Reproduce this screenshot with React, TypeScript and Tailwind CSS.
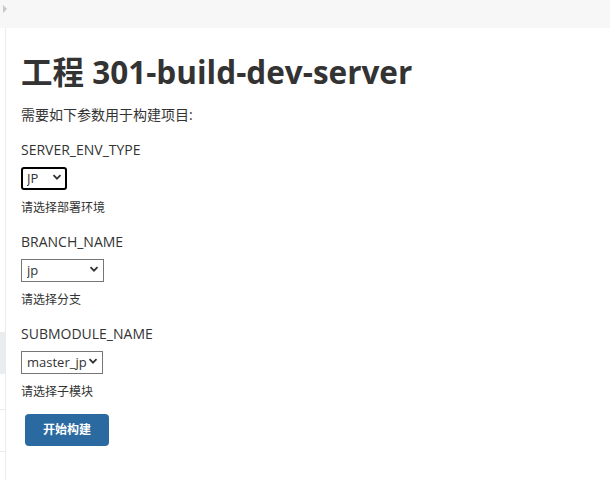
import React from "react";

const font = { fontFamily: '"Open Sans", "Noto Sans CJK SC", sans-serif' };

const Chevron = () => (
  <svg width="10" height="10" viewBox="0 0 10 10" className="absolute right-[5px] top-1/2 -translate-y-1/2 pointer-events-none">
    <path d="M1.5 3.2 L5 6.7 L8.5 3.2" fill="none" stroke="#333" strokeWidth="1.8" />
  </svg>
);

const ParamSelect = ({ value, width, focused }: { value: string; width: string; focused?: boolean }) => (
  <div className={`relative ${width} h-[23px]`}>
    <select
      defaultValue={value}
      className={
        focused
          ? "appearance-none w-full h-full border-2 border-black rounded-[3px] pl-[4px] text-[13px] text-[#333] bg-white outline-none"
          : "appearance-none w-full h-full border border-[#767676] pl-[5px] text-[13px] text-[#333] bg-white outline-none"
      }
      style={font}
    >
      <option>{value}</option>
    </select>
    <Chevron />
  </div>
);

const Param = ({ name, value, width, help, focused }: { name: string; value: string; width: string; help: string; focused?: boolean }) => (
  <div className="mb-[15px]">
    <div className="text-[14px] leading-[20px] text-[#333] mb-[5px]">{name}</div>
    <ParamSelect value={value} width={width} focused={focused} />
    <div className="text-[12px] leading-[18px] text-[#333] mt-[11px]">{help}</div>
  </div>
);

export default function App() {
  return (
    <div className="w-[610px] h-[480px] bg-white overflow-hidden flex flex-col" style={font}>
      <div className="h-[28px] bg-[#f7f7f7] relative shrink-0">
        <div className="absolute left-[3px] top-[5px] w-0 h-0 border-y-[4px] border-y-transparent border-l-[4px] border-l-[#c8c8c8]" />
      </div>
      <div className="flex flex-1">
        <div className="w-[6px] border-r border-[#ececec] flex flex-col">
          <div className="h-[304px]" />
          <div className="h-[42px] bg-[#e9edf0]" />
          <div className="h-[36px] border-b border-[#ececec]" />
          <div className="h-[42px] border-b border-[#ececec]" />
        </div>
        <div className="flex-1 pl-[15px] pt-[24px]">
          <h1 className="text-[31.5px] leading-[40px] font-bold text-[#333] mb-[13px]">工程 301-build-dev-server</h1>
          <p className="text-[14px] leading-[20px] text-[#333] mb-[15px]">需要如下参数用于构建项目:</p>
          <Param name="SERVER_ENV_TYPE" value="JP" width="w-[46px]" help="请选择部署环境" focused />
          <Param name="BRANCH_NAME" value="jp" width="w-[83px]" help="请选择分支" />
          <Param name="SUBMODULE_NAME" value="master_jp" width="w-[82px]" help="请选择子模块" />
          <button className="ml-[4px] -mt-[2px] w-[84px] h-[32px] bg-[#2b6aa0] rounded-[4px] text-white text-[12px] font-bold">
            开始构建
          </button>
        </div>
      </div>
    </div>
  );
}
